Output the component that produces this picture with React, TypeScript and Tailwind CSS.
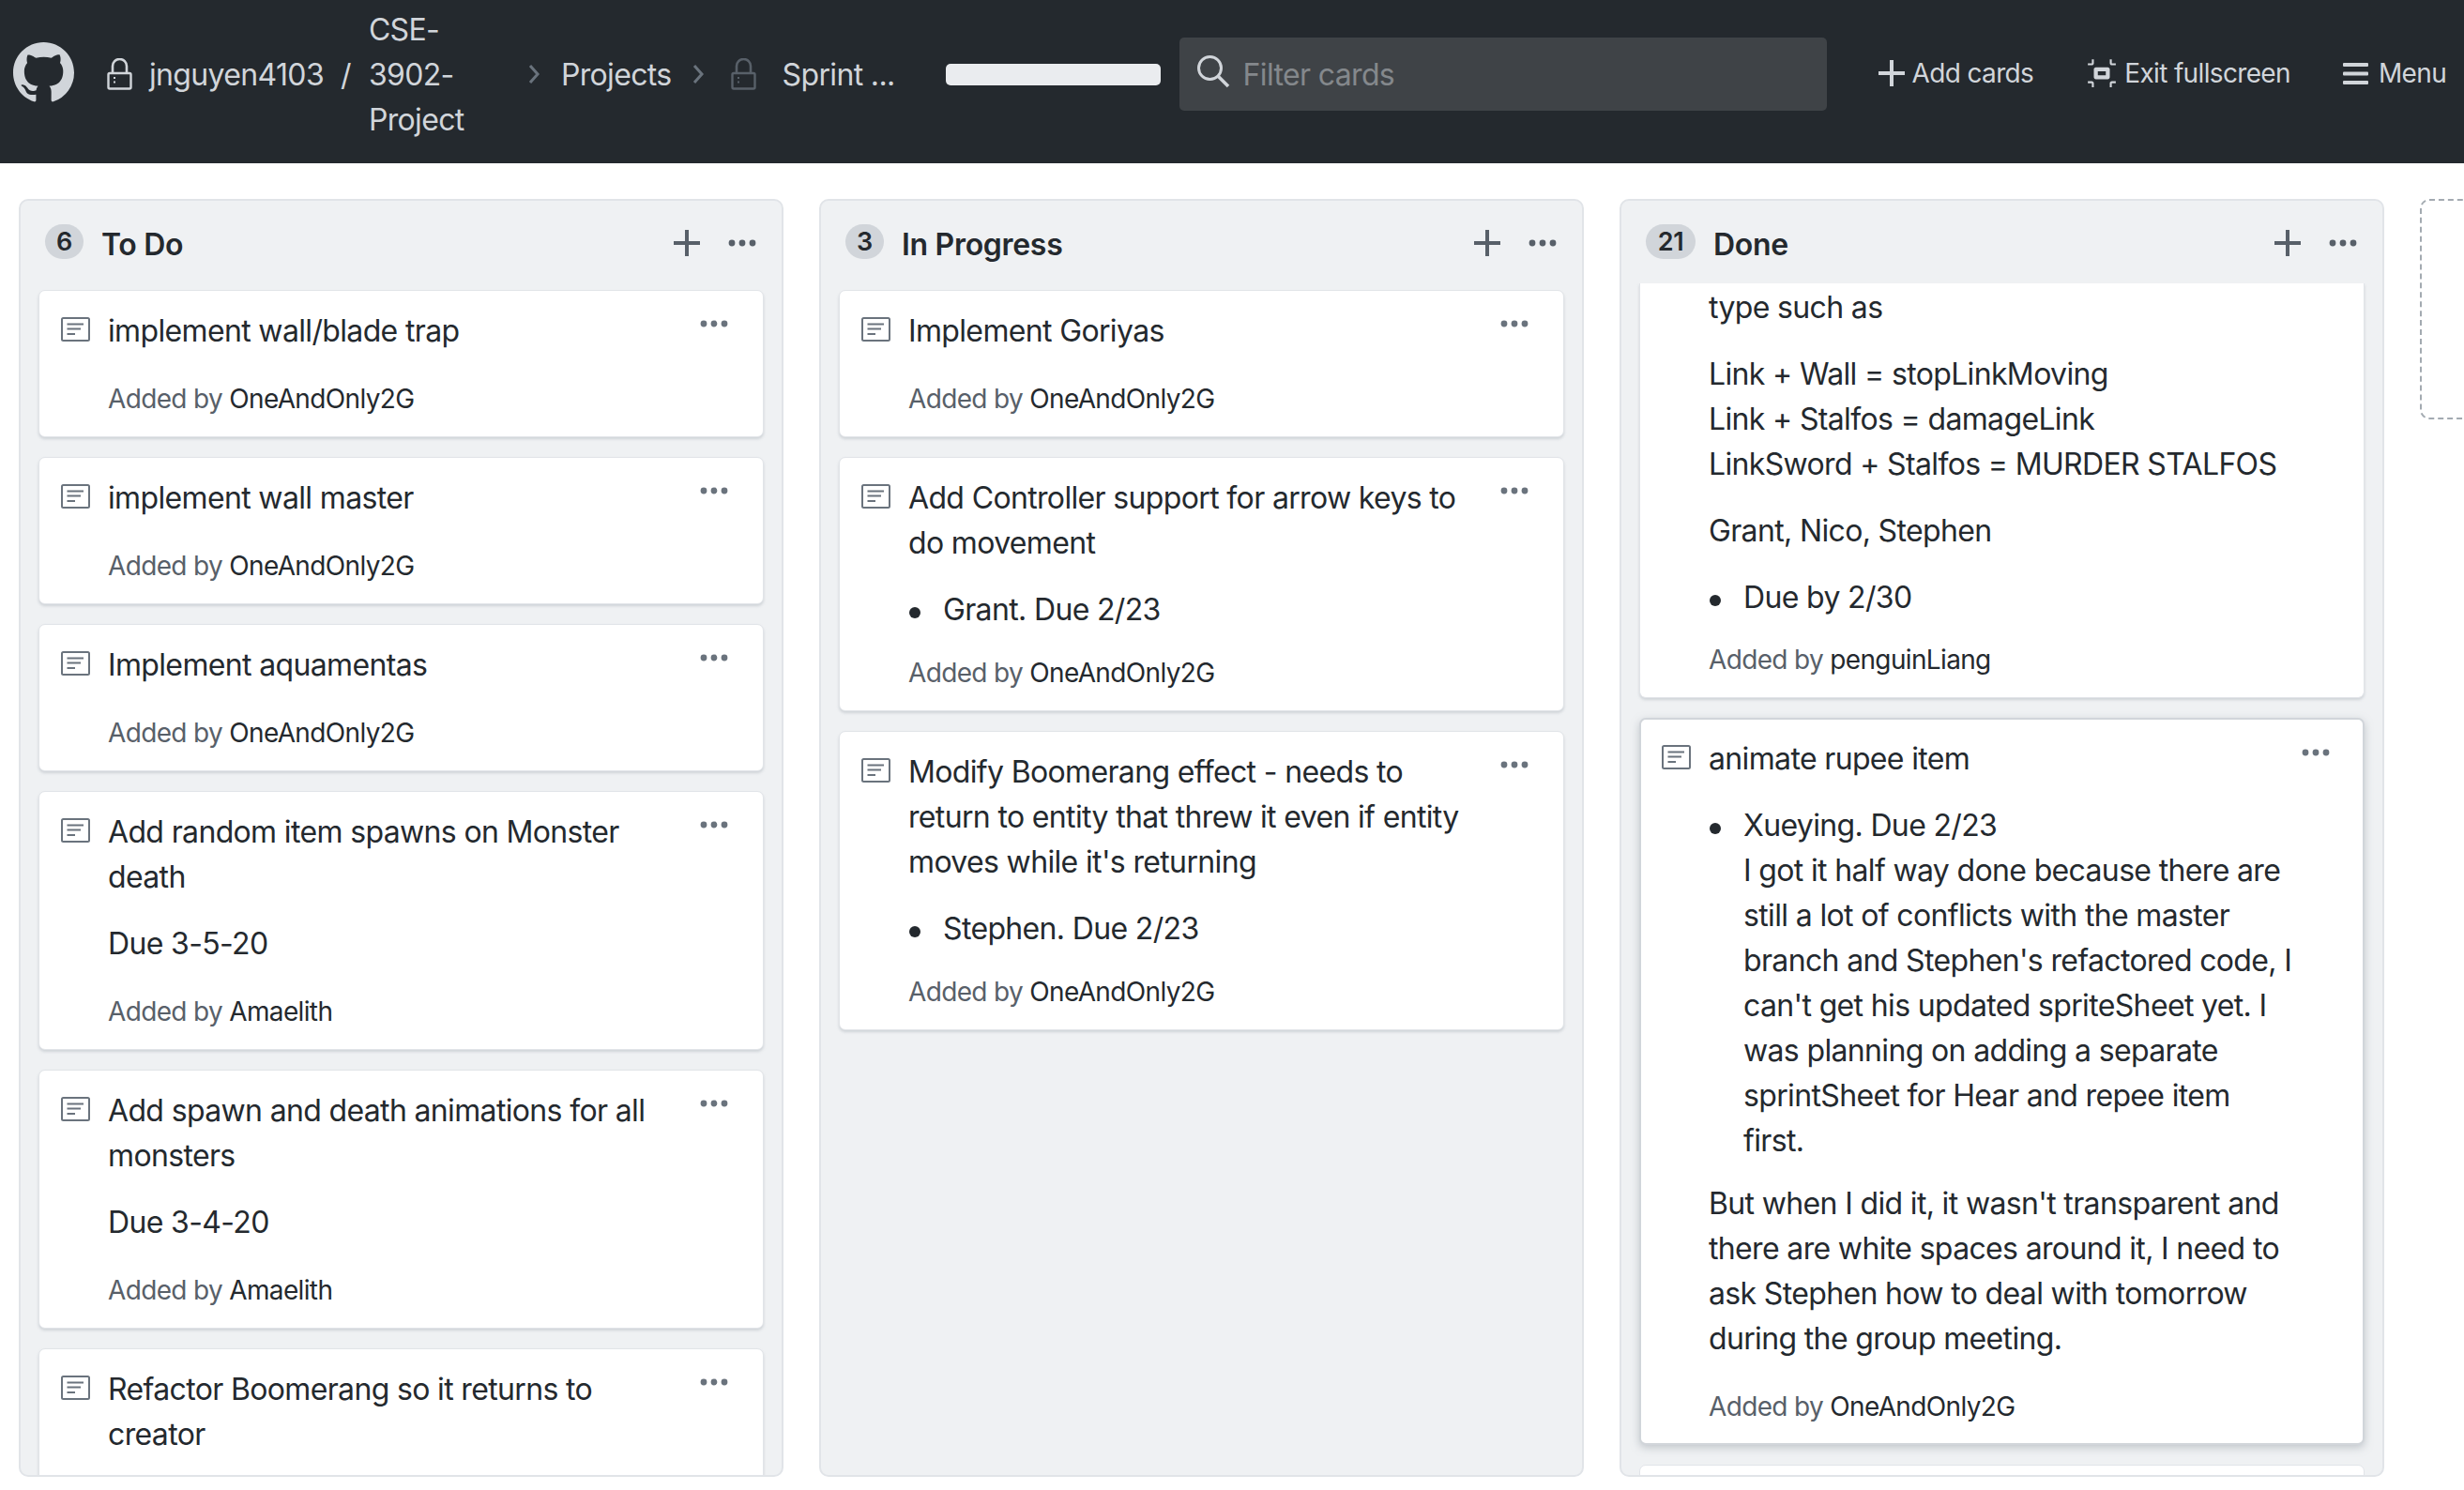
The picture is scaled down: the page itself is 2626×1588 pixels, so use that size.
import type { ReactNode } from "react";

function NoteIcon() {
  return (
    <svg viewBox="0 0 31 26" className="w-[31px] h-[26px] shrink-0 mt-[9px] mr-[19px]" fill="none">
      <rect x="1" y="1" width="29" height="24" rx="1.5" stroke="#6a737d" strokeWidth="2" />
      <path d="M6.5 7.5H24M6.5 12.5H21M6.5 18H15" stroke="#6a737d" strokeWidth="2" />
    </svg>
  );
}

function Dots({ color = "#6a737d" }: { color?: string }) {
  return (
    <svg viewBox="0 0 30 8" className="w-[30px] h-[8px] shrink-0" fill={color}>
      <circle cx="4" cy="4" r="3.4" />
      <circle cx="15" cy="4" r="3.4" />
      <circle cx="26" cy="4" r="3.4" />
    </svg>
  );
}

function Lock({ color, className }: { color: string; className: string }) {
  return (
    <svg viewBox="0 0 27 34" className={className} fill="none">
      <path d="M6 16V8.5a7.5 7.5 0 0 1 15 0V16" stroke={color} strokeWidth="2.6" />
      <rect x="1.5" y="16" width="24" height="16.5" rx="1.5" stroke={color} strokeWidth="2.4" />
      <path d="M8 20v9" stroke={color} strokeWidth="2" strokeDasharray="2 2.5" />
    </svg>
  );
}

function Chevron() {
  return (
    <svg viewBox="0 0 13 22" className="w-[13px] h-[22px] shrink-0" fill="none">
      <path d="M2 2l8 9-8 9" stroke="#6a737d" strokeWidth="3" />
    </svg>
  );
}

function Plus({ color }: { color: string }) {
  return (
    <svg viewBox="0 0 28 28" className="w-[28px] h-[28px] shrink-0" fill="none">
      <path d="M14 0v28M0 14h28" stroke={color} strokeWidth="4" />
    </svg>
  );
}

function AddedBy({ name, className }: { name: string; className: string }) {
  return (
    <div className={`text-[28px] leading-[42px] text-[#586069] ${className}`}>
      Added by <span className="text-[#24292e]">{name}</span>
    </div>
  );
}

function Card({ children, by }: { children: ReactNode; by?: string }) {
  return (
    <div className={`mb-[21px] shrink-0 rounded-[7px] bg-white border border-[#e1e4e8] shadow-[0_2px_3px_rgba(149,157,165,0.35)] pl-[23px] pr-[20px] pt-[19px] ${by ? "pb-[19px]" : "pb-[80px]"}`}>
      <div className="flex items-start">
        <NoteIcon />
        <div className="min-w-0 flex-1 text-[#24292e] text-[32px] leading-[48px]">{children}</div>
        <div className="w-[64px] shrink-0 flex justify-end pt-[12px] pr-[17px]">
          <Dots />
        </div>
      </div>
      {by && <AddedBy name={by} className="pl-[50px] mt-[27px]" />}
    </div>
  );
}

function P({ children }: { children: ReactNode }) {
  return <p className="mt-[23px]">{children}</p>;
}

function Bullet({ children }: { children: ReactNode }) {
  return (
    <div className="mt-[23px] -mb-[5px] flex">
      <div className="w-[37px] shrink-0 pl-px pt-[21px]">
        <div className="w-[12px] h-[12px] rounded-full bg-[#24292e]" />
      </div>
      <div className="min-w-0 flex-1">{children}</div>
    </div>
  );
}

function Column({ count, title, headerHeight, children }: { count: number; title: string; headerHeight: string; children: ReactNode }) {
  return (
    <section className="w-[815px] shrink-0 h-[1362px] rounded-[10px] bg-[#eff1f3] border-2 border-[#e1e4e8] flex flex-col overflow-hidden">
      <header className={`${headerHeight} shrink-0 flex items-start pl-[26px] pr-[27px] pt-[25px]`}>
        <span className={`${count > 9 ? "w-[53px]" : "w-[41px]"} h-[37px] rounded-full bg-[#d1d5da] text-[#24292e] text-[27px] font-semibold leading-[37px] text-center tracking-[-0.3px]`}>
          {count}
        </span>
        <h2 className="ml-[19px] -mt-[2px] text-[32px] leading-[48px] font-semibold text-[#24292e] flex-1 tracking-[-0.3px]">{title}</h2>
        <div className="flex items-center gap-[30px] h-[37px] pt-[2px]">
          <Plus color="#586069" />
          <Dots color="#586069" />
        </div>
      </header>
      <div className="flex-1 min-h-0 overflow-hidden px-[19px] flex flex-col">{children}</div>
    </section>
  );
}

export default function App() {
  return (
    <div className="font-['Inter','Liberation_Sans',sans-serif] tracking-[-0.65px] w-[2626px] h-[1588px] bg-white overflow-hidden">
      <nav className="h-[174px] bg-[#24292e] flex items-center pb-[16px] text-[#d1d5da] whitespace-nowrap">
        <svg viewBox="0 0 16 16" className="ml-[14px] -mt-[4px] w-[65px] h-[65px] shrink-0" fill="#d1d5da">
          <path d="M8 0C3.58 0 0 3.58 0 8c0 3.54 2.29 6.53 5.47 7.59.4.07.55-.17.55-.38 0-.19-.01-.82-.01-1.49-2.01.37-2.53-.49-2.69-.94-.09-.23-.48-.94-.82-1.13-.28-.15-.68-.52-.01-.53.63-.01 1.08.58 1.23.82.72 1.21 1.87.87 2.33.66.07-.52.28-.87.51-1.07-1.78-.2-3.64-.89-3.64-3.95 0-.87.31-1.59.82-2.15-.08-.2-.36-1.02.08-2.12 0 0 .67-.21 2.2.82.64-.18 1.32-.27 2-.27.68 0 1.36.09 2 .27 1.53-1.04 2.2-.82 2.2-.82.44 1.1.16 1.92.08 2.12.51.56.82 1.27.82 2.15 0 3.07-1.87 3.75-3.65 3.95.29.25.54.73.54 1.48 0 1.07-.01 1.93-.01 2.2 0 .21.15.46.55.38A8.013 8.013 0 0016 8c0-4.42-3.58-8-8-8z" />
        </svg>
        <Lock color="#d1d5da" className="ml-[35px] w-[27px] h-[34px] shrink-0" />
        <span className="ml-[18px] mt-[2px] text-[32px] leading-[48px]">jnguyen4103</span>
        <span className="ml-[18px] mt-[2px] text-[32px] leading-[48px]">/</span>
        <span className="ml-[19px] mt-[2px] w-[170px] shrink-0 text-[32px] leading-[48px]">CSE-<br />3902-<br />Project</span>
        <Chevron />
        <span className="ml-[22px] mt-[2px] text-[32px] leading-[48px]">Projects</span>
        <span className="ml-[22px]"><Chevron /></span>
        <Lock color="#586069" className="ml-[28px] w-[27px] h-[34px] shrink-0" />
        <span className="ml-[28px] mt-[2px] w-[118px] text-[32px] leading-[48px]">Sprint ...</span>
        <div className="ml-[56px] w-[229px] h-[23px] rounded-[5px] bg-[#eaecef]" />
        <div className="ml-[20px] w-[690px] h-[78px] rounded-[5px] bg-[#3f4347] flex items-center pl-[18px]">
          <svg viewBox="0 0 36 36" className="w-[36px] h-[36px] -mt-[6px] shrink-0" fill="none">
            <circle cx="14.5" cy="14.5" r="12" stroke="#d1d5da" strokeWidth="3" />
            <path d="M23.5 23.5L34 34" stroke="#d1d5da" strokeWidth="3.6" />
          </svg>
          <span className="ml-[14px] mt-[2px] text-[32px] text-[#84888c]">Filter cards</span>
        </div>
        <div className="ml-[55px] flex items-center gap-[8px] text-[28px] leading-[42px] -mt-[2px]">
          <Plus color="#d1d5da" />
          <span>Add cards</span>
        </div>
        <div className="ml-[58px] flex items-center gap-[9px] text-[28px] leading-[42px] -mt-[2px]">
          <svg viewBox="0 0 14 16" className="w-[30px] h-[34px] shrink-0" fill="#d1d5da">
            <path d="M2 4H0V3h2V1h1v2c0 .547-.453 1-1 1zm0 8H0v1h2v2h1v-2c0-.547-.453-1-1-1zm9-2c0 .547-.453 1-1 1H4c-.547 0-1-.453-1-1V6c0-.547.453-1 1-1h6c.547 0 1 .453 1 1v4zM9 7H5v2h4V7zm2 6v2h1v-2h2v-1h-2c-.547 0-1 .453-1 1zm1-9h2V3h-2V1h-1v2c0 .547.453 1 1 1z" />
          </svg>
          <span>Exit fullscreen</span>
        </div>
        <div className="ml-[56px] flex items-center gap-[11px] text-[28px] leading-[42px] -mt-[2px]">
          <svg viewBox="0 0 27 23" className="w-[27px] h-[23px] shrink-0" fill="#d1d5da">
            <rect width="27" height="4" rx="1" />
            <rect y="9.5" width="27" height="4" rx="1" />
            <rect y="19" width="27" height="4" rx="1" />
          </svg>
          <span>Menu</span>
        </div>
      </nav>

      <main className="flex items-start gap-[38px] pl-[20px] pt-[38px]">
        <Column count={6} title="To Do" headerHeight="h-[95px]">
          <Card by="OneAndOnly2G">implement wall/blade trap</Card>
          <Card by="OneAndOnly2G">implement wall master</Card>
          <Card by="OneAndOnly2G">Implement aquamentas</Card>
          <Card by="Amaelith">
            Add random item spawns on Monster death
            <P>Due 3-5-20</P>
          </Card>
          <Card by="Amaelith">
            Add spawn and death animations for all monsters
            <P>Due 3-4-20</P>
          </Card>
          <Card>Refactor Boomerang so it returns to creator</Card>
        </Column>

        <Column count={3} title="In Progress" headerHeight="h-[95px]">
          <Card by="OneAndOnly2G">Implement Goriyas</Card>
          <Card by="OneAndOnly2G">
            Add Controller support for arrow keys to do movement
            <Bullet>Grant. Due 2/23</Bullet>
          </Card>
          <Card by="OneAndOnly2G">
            Modify Boomerang effect - needs to return to entity that threw it even if entity moves while it's returning
            <Bullet>Stephen. Due 2/23</Bullet>
          </Card>
        </Column>

        <Column count={21} title="Done" headerHeight="h-[88px]">
          <div className="shrink-0 mb-[21px] bg-white rounded-b-[7px] border border-[#e1e4e8] border-t-0 shadow-[0_2px_3px_rgba(149,157,165,0.35)] pl-[73px] pr-[40px] pt-[2px] pb-[19px] text-[32px] leading-[48px] text-[#24292e]">
            type such as
            <P>
              Link + Wall = stopLinkMoving
              <br />
              Link + Stalfos = damageLink
              <br />
              LinkSword + Stalfos = MURDER STALFOS
            </P>
            <P>Grant, Nico, Stephen</P>
            <Bullet>Due by 2/30</Bullet>
            <AddedBy name="penguinLiang" className="mt-[26px]" />
          </div>
          <div className="shrink-0 mb-[21px] rounded-[7px] bg-white border-2 border-[#d1d5da] shadow-[0_3px_8px_rgba(149,157,165,0.5)] pl-[22px] pr-[19px] pt-[18px] pb-[18px]">
            <div className="flex items-start">
              <NoteIcon />
              <div className="min-w-0 flex-1 text-[#24292e] text-[32px] leading-[48px]">
                animate rupee item
                <Bullet>
                  Xueying. Due 2/23
                  <br />I got it half way done because there are still a lot of conflicts with the master branch and Stephen's refactored code, I can't get his updated spriteSheet yet. I was planning on adding a separate sprintSheet for Hear and repee item
                  <br />first.
                </Bullet>
              </div>
              <div className="w-[49px] shrink-0 flex justify-end pt-[13px] pr-[16px]">
                <Dots />
              </div>
            </div>
            <div className="pl-[50px] pr-[49px] text-[32px] leading-[48px] text-[#24292e] mt-[24px]">
              But when I did it, it wasn't transparent and there are white spaces around it, I need to ask Stephen how to deal with tomorrow during the group meeting.
            </div>
            <AddedBy name="OneAndOnly2G" className="pl-[50px] mt-[27px]" />
          </div>
          <div className="shrink-0 h-[40px] rounded-t-[7px] bg-white border border-[#e1e4e8]" />
        </Column>

        <div className="w-[60px] h-[235px] shrink-0 rounded-l-[10px] border-2 border-r-0 border-dashed border-[#a3aab1]" />
      </main>
    </div>
  );
}
